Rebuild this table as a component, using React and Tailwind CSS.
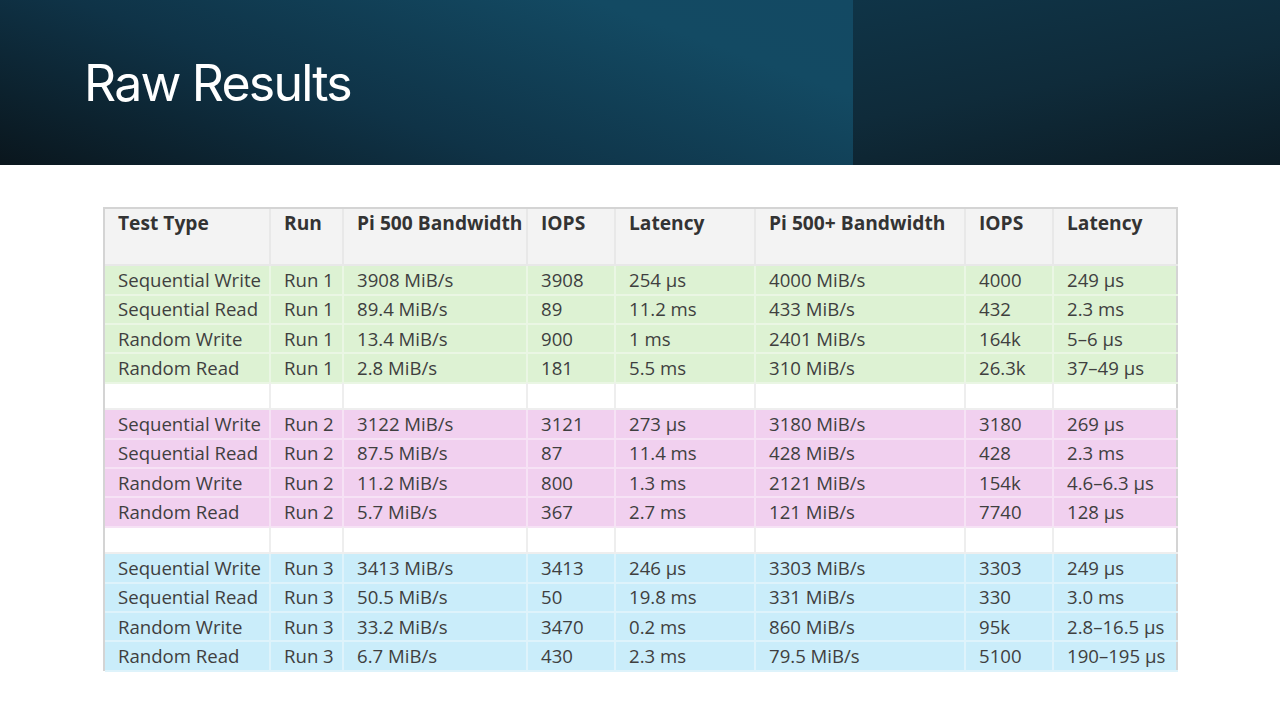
import React from 'react';

const HEAD = ['Test Type', 'Run', 'Pi 500 Bandwidth', 'IOPS', 'Latency', 'Pi 500+ Bandwidth', 'IOPS', 'Latency'];

const GROUPS = [
  {
    bg: 'bg-[#ddf2d3]',
    line: 'border-[#eaf6e4]',
    rows: [
      ['Sequential Write', 'Run 1', '3908 MiB/s', '3908', '254 µs', '4000 MiB/s', '4000', '249 µs'],
      ['Sequential Read', 'Run 1', '89.4 MiB/s', '89', '11.2 ms', '433 MiB/s', '432', '2.3 ms'],
      ['Random Write', 'Run 1', '13.4 MiB/s', '900', '1 ms', '2401 MiB/s', '164k', '5–6 µs'],
      ['Random Read', 'Run 1', '2.8 MiB/s', '181', '5.5 ms', '310 MiB/s', '26.3k', '37–49 µs'],
    ],
  },
  {
    bg: 'bg-[#f1d0ef]',
    line: 'border-[#f6e2f5]',
    rows: [
      ['Sequential Write', 'Run 2', '3122 MiB/s', '3121', '273 µs', '3180 MiB/s', '3180', '269 µs'],
      ['Sequential Read', 'Run 2', '87.5 MiB/s', '87', '11.4 ms', '428 MiB/s', '428', '2.3 ms'],
      ['Random Write', 'Run 2', '11.2 MiB/s', '800', '1.3 ms', '2121 MiB/s', '154k', '4.6–6.3 µs'],
      ['Random Read', 'Run 2', '5.7 MiB/s', '367', '2.7 ms', '121 MiB/s', '7740', '128 µs'],
    ],
  },
  {
    bg: 'bg-[#caedfa]',
    line: 'border-[#def3fb]',
    rows: [
      ['Sequential Write', 'Run 3', '3413 MiB/s', '3413', '246 µs', '3303 MiB/s', '3303', '249 µs'],
      ['Sequential Read', 'Run 3', '50.5 MiB/s', '50', '19.8 ms', '331 MiB/s', '330', '3.0 ms'],
      ['Random Write', 'Run 3', '33.2 MiB/s', '3470', '0.2 ms', '860 MiB/s', '95k', '2.8–16.5 µs'],
      ['Random Read', 'Run 3', '6.7 MiB/s', '430', '2.3 ms', '79.5 MiB/s', '5100', '190–195 µs'],
    ],
  },
];

const COLS = 'grid grid-cols-[166px_73px_184px_88px_140px_210px_88px_124px]';

function DataRow({ cells, bg, line }) {
  return (
    <div className={`${COLS} h-[29.25px] ${bg}`}>
      {cells.map((c, i) => (
        <div
          key={i}
          className={`flex items-center pl-[13px] whitespace-nowrap border-b-2 ${line} ${i < 7 ? 'border-r-2' : ''}`}
        >
          {c}
        </div>
      ))}
    </div>
  );
}

function BlankRow() {
  return (
    <div className={`${COLS} h-[27px] bg-white`}>
      {HEAD.map((_, i) => (
        <div key={i} className={`border-b-2 border-[#eeeeee] ${i < 7 ? 'border-r-2' : ''}`} />
      ))}
    </div>
  );
}

export default function App() {
  return (
    <div className="w-[1280px] h-[720px] bg-white overflow-hidden">
      <header className="flex h-[165px]">
        <div className="flex-1 flex items-center pl-[84px] bg-[linear-gradient(20deg,#0a161d_0%,#0f3347_40%,#134a63_80%,#134963_100%)]">
          <h1 className="text-white text-[50px] tracking-[-1.8px] font-['Inter',sans-serif] font-normal pt-[2px]">
            Raw Results
          </h1>
        </div>
        <div className="w-[427px] bg-[linear-gradient(170deg,#0f3447_0%,#0f2b3a_50%,#0c1c25_100%)]" />
      </header>

      <div className="ml-[103px] mt-[42px] w-[1075px] border-l-2 border-t-2 border-r-2 border-[#d4d4d4] text-[18.6px] text-[#3f3f3f] font-['Open_Sans','Noto_Sans',sans-serif]">
        <div className={`${COLS} h-[57px] bg-[#f3f3f3]`}>
          {HEAD.map((h, i) => (
            <div
              key={i}
              className={`pl-[13px] pt-0 text-[19.2px] font-bold text-[#333333] whitespace-nowrap border-b-2 border-[#e8e8e8] ${i < 7 ? 'border-r-2' : ''}`}
            >
              {h}
            </div>
          ))}
        </div>
        {GROUPS.map((g, gi) => (
          <React.Fragment key={gi}>
            {g.rows.map((r, ri) => (
              <DataRow key={ri} cells={r} bg={g.bg} line={g.line} />
            ))}
            {gi < 2 && <BlankRow />}
          </React.Fragment>
        ))}
      </div>
    </div>
  );
}
